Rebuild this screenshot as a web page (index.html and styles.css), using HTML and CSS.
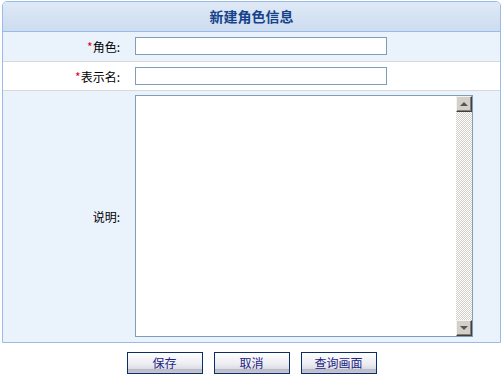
FILE: index.html
```html
<!DOCTYPE html>
<html lang="zh-CN">
<head>
    <meta charset="UTF-8">
    <title>新建角色信息</title>
    <link rel="stylesheet" href="styles.css">
</head>
<body>

    <div class="panel">
        <div class="panel-head">新建角色信息</div>
        <table class="form">
            <tr class="row-alt">
                <th><span class="req">*</span>角色:</th>
                <td><input type="text" class="text-input"></td>
            </tr>
            <tr>
                <th><span class="req">*</span>表示名:</th>
                <td><input type="text" class="text-input"></td>
            </tr>
            <tr class="row-alt row-last">
                <th>说明:</th>
                <td>
                    <div class="memo">
                        <div class="memo-area"></div>
                        <div class="scrollbar">
                            <div class="sb-btn"><span class="arrow-up"></span></div>
                            <div class="sb-track"></div>
                            <div class="sb-btn"><span class="arrow-down"></span></div>
                        </div>
                    </div>
                </td>
            </tr>
        </table>
    </div>

    <div class="actions">
        <button class="btn">保存</button>
        <button class="btn">取消</button>
        <button class="btn">查询画面</button>
    </div>

</body>
</html>
```

FILE: styles.css
```css
:root {
    --panel-border: #99bbe8;
    --row-alt: #eaf2fc;
    --row-line: #d9d9d9;
    --title-color: #15428b;
    --input-border: #7f9db9;
    --face: #d4d0c8;
}

* {
    box-sizing: border-box;
    margin: 0;
    padding: 0;
}

body {
    font-family: "Noto Sans CJK SC", "Liberation Sans", sans-serif;
    font-size: 12px;
    color: #000;
    background: #fff;
    padding: 1px 3px 0 2px;
}

.panel {
    width: 499px;
    border: 1px solid var(--panel-border);
    border-radius: 5px 5px 0 0;
    overflow: hidden;
}

.panel-head {
    height: 30px;
    line-height: 29px;
    text-align: center;
    font-size: 14px;
    font-weight: bold;
    color: var(--title-color);
    background: linear-gradient(#dfe9f6, #cddcef);
    border-bottom: 1px solid var(--panel-border);
}

.form {
    width: 100%;
    border-collapse: collapse;
}

.form tr {
    height: 29px;
    border-bottom: 1px solid var(--row-line);
}

.form tr.row-alt {
    background: var(--row-alt);
}

.form tr.row-last {
    height: 252px;
    border-bottom: none;
}

.form th {
    width: 118px;
    font-weight: normal;
    text-align: right;
    vertical-align: middle;
    padding-top: 1px;
    padding-right: 1px;
}

.form td {
    padding-left: 14px;
    vertical-align: middle;
}

.req {
    color: #e0002a;
}

.text-input {
    display: block;
    width: 252px;
    height: 18px;
    border: 1px solid var(--input-border);
    background: #fff;
    font: inherit;
    outline: none;
}

.memo {
    display: flex;
    width: 338px;
    height: 242px;
    border: 1px solid var(--input-border);
    background: #fff;
}

.memo-area {
    flex: 1;
}

.scrollbar {
    width: 16px;
    display: flex;
    flex-direction: column;
}

.sb-btn {
    height: 16px;
    background: var(--face);
    border: 1px solid;
    border-color: #f4f3ee #404040 #404040 #f4f3ee;
    box-shadow: inset -1px -1px 0 #808080;
    display: flex;
    align-items: center;
    justify-content: center;
}

.sb-track {
    flex: 1;
    background-image: repeating-conic-gradient(var(--face) 0 25%, #fff 0 50%);
    background-size: 2px 2px;
}

.arrow-up,
.arrow-down {
    width: 0;
    height: 0;
    border-left: 4px solid transparent;
    border-right: 4px solid transparent;
}

.arrow-up {
    border-bottom: 4px solid #555;
    margin-top: -1px;
}

.arrow-down {
    border-top: 4px solid #555;
}

.actions {
    display: flex;
    justify-content: center;
    gap: 11px;
    padding-top: 9px;
}

.btn {
    width: 76px;
    height: 22px;
    border: 1px solid #0a2f66;
    background: linear-gradient(#ffffff 0%, #ececf2 55%, #dcdce6 78%, #b9b9c8 80%, #c6c6d2 100%);
    font: inherit;
    color: #1d2584;
    line-height: 18px;
    cursor: pointer;
}
```
